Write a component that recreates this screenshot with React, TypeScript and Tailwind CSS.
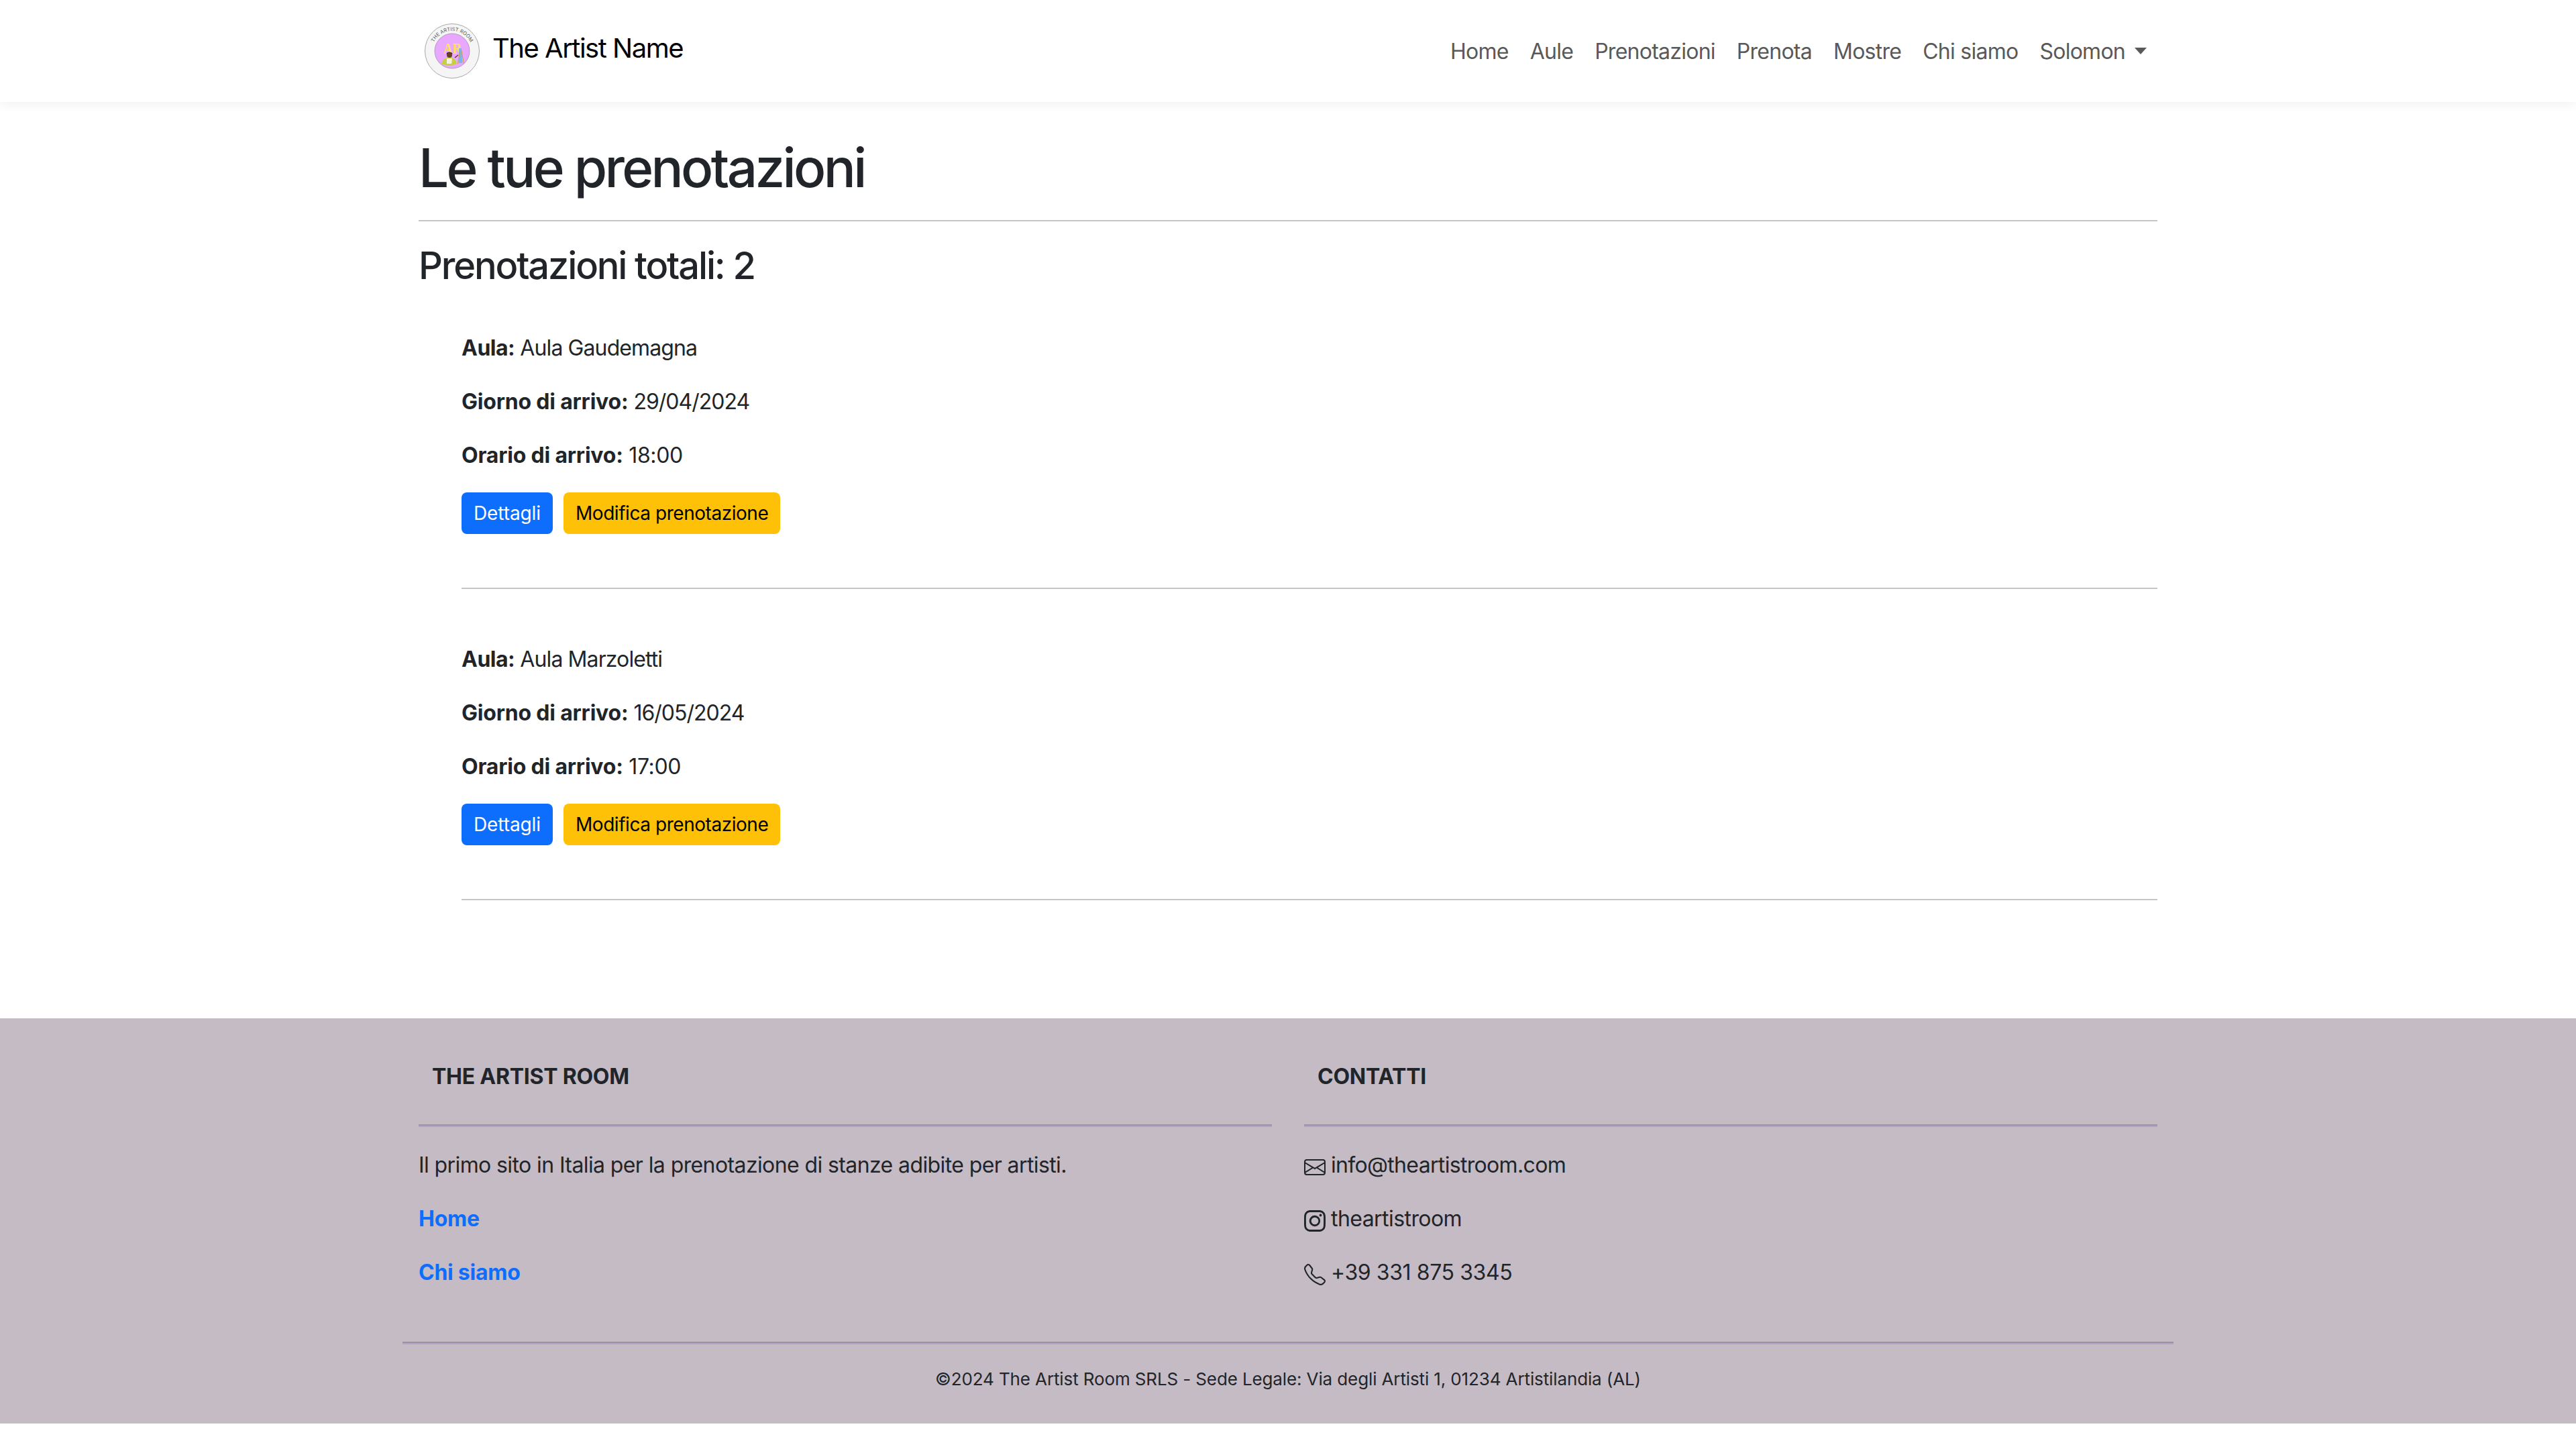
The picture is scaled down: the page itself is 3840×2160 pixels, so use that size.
import React from "react";
import { BsEnvelope, BsInstagram, BsTelephone } from "react-icons/bs";

function Logo() {
  return (
    <svg width="84" height="84" viewBox="0 0 84 84" className="shrink-0">
      <defs>
        <path id="logoArc" d="M 12 42 A 30 30 0 0 1 72 42" fill="none" />
      </defs>
      <circle cx="42" cy="42" r="40.5" fill="#f5f5f5" stroke="#a8a8a8" strokeWidth="1" />
      <circle cx="42" cy="42" r="26" fill="#e9a8ff" stroke="#8a7a90" strokeWidth="0.6" />
      <text fontSize="7.4" fill="#555" fontFamily="Inter, sans-serif">
        <textPath href="#logoArc" startOffset="50%" textAnchor="middle">THE ARTIST ROOM</textPath>
      </text>
      <text x="42.5" y="46" textAnchor="middle" fontSize="23" fontWeight="700" fill="#ffe066" fontFamily="'Liberation Serif', serif" textLength="27" lengthAdjust="spacingAndGlyphs">AR</text>
      <path d="M26 61 Q28 53 35 52 L41 52 Q47 53 49 61 Q38 66 26 61Z" fill="#c4d23c" />
      <path d="M34 53 L42 53 L41 61 L34 61Z" fill="#f3f3e0" />
      <circle cx="38" cy="48" r="4" fill="#6b3d22" />
      <path d="M33.5 47 Q38 41.5 42.5 47 L42 45 Q38 42 34 45Z" fill="#1f1712" />
      <path d="M52 38 L56 38 L57.5 60 L52 60Z" fill="#7fb4e6" />
      <path d="M50.5 61 L53.5 42 M59.5 61 L56 42" stroke="#d99a3d" strokeWidth="1" />
      <path d="M46 52 L51 48" stroke="#6b3d22" strokeWidth="1.6" />
    </svg>
  );
}

function Booking({ aula, giorno, orario }: { aula: string; giorno: string; orario: string }) {
  return (
    <div className="mb-[81px] ml-16">
      <p className="mb-8"><b className="tracking-[-0.5px]">Aula:</b><span className="tracking-[-0.9px]"> {aula}</span></p>
      <p className="mb-8"><b className="tracking-[-0.2px]">Giorno di arrivo:</b><span className="tracking-[-1px]"> {giorno}</span></p>
      <p className="mb-[31px]"><b className="tracking-[-0.2px]">Orario di arrivo:</b><span className="tracking-[-0.4px]"> {orario}</span></p>
      <div className="flex gap-4">
        <a className="h-[62px] rounded-lg bg-[#0d6efd] px-[18px] text-[28px] leading-[62px] tracking-[-0.1px] text-white">Dettagli</a>
        <a className="h-[62px] rounded-lg bg-[#ffc107] px-[18px] text-[28px] leading-[62px] tracking-[-0.45px] text-black">Modifica prenotazione</a>
      </div>
      <hr className="mt-20 h-0.5 border-0 bg-[#c4c5c6]" />
    </div>
  );
}

function Rule() {
  return (
    <div className="h-1 bg-[#b9a0cc]">
      <div className="h-0.5 bg-[#999696]" />
    </div>
  );
}

export default function App() {
  return (
    <div className="font-['Inter',sans-serif] text-[32px] leading-[48px] text-[#212529]">
      <nav className="h-[152px] bg-white shadow-[0_4px_16px_rgba(0,0,0,0.06)]">
        <div className="mx-auto flex h-full w-[2640px] items-center justify-between px-6">
          <div className="flex items-center gap-[18px] pl-[8px]">
            <Logo />
            <span className="-mt-[8px] text-[40px] leading-[60px] tracking-[-1.5px] text-black">The Artist Name</span>
          </div>
          <div className="mt-0.5 flex items-center tracking-[-0.74px] text-[#595959]">
            {["Home", "Aule", "Prenotazioni", "Prenota", "Mostre", "Chi siamo"].map((l) => (
              <a key={l} className="px-4">{l}</a>
            ))}
            <a className="flex items-center px-4">
              Solomon
              <span className="mt-[-2px] ml-[14px] h-0 w-0 border-x-[9.5px] border-t-[10px] border-x-transparent border-t-[#595959]" />
            </a>
          </div>
        </div>
      </nav>

      <main className="mx-auto h-[1366px] w-[2640px] px-6">
        <h1 className="pt-[50px] text-[80px] leading-[96px] font-medium tracking-[-3.65px]">Le tue prenotazioni</h1>
        <hr className="mt-[30px] h-0.5 border-0 bg-[#c4c5c6]" />
        <h3 className="mt-[32px] text-[56px] leading-[68px] font-medium tracking-[-2.15px]">Prenotazioni totali: 2</h3>
        <div className="mt-[65px]">
          <Booking aula="Aula Gaudemagna" giorno="29/04/2024" orario="18:00" />
          <Booking aula="Aula Marzoletti" giorno="16/05/2024" orario="17:00" />
        </div>
      </main>

      <footer className="h-[604px] bg-[#c5bbc5]">
        <div className="mx-auto w-[2640px]">
          <div className="grid grid-cols-2 gap-x-12 px-6">
            <div>
              <div className="flex h-[158px] items-center px-5 pt-4">
                <h5 className="font-bold tracking-[-0.25px]">THE ARTIST ROOM</h5>
              </div>
              <Rule />
              <div className="flex flex-col gap-8 pt-[33px]">
                <p className="tracking-[-0.6px]">Il primo sito in Italia per la prenotazione di stanze adibite per artisti.</p>
                <a className="font-bold tracking-[-0.25px] text-[#0d6efd]">Home</a>
                <a className="font-bold tracking-[-0.25px] text-[#0d6efd]">Chi siamo</a>
              </div>
            </div>
            <div>
              <div className="flex h-[158px] items-center px-5 pt-4">
                <h5 className="font-bold tracking-[-0.25px]">CONTATTI</h5>
              </div>
              <Rule />
              <div className="flex flex-col gap-8 pt-[33px]">
                <p className="flex items-center gap-2 tracking-[-0.67px]"><BsEnvelope size={32} className="mt-1.5" />info@theartistroom.com</p>
                <p className="flex items-center gap-2 tracking-[-0.56px]"><BsInstagram size={32} className="mt-1.5" />theartistroom</p>
                <p className="flex items-center gap-2 tracking-[-0.4px]"><BsTelephone size={32} className="mt-1.5" />+39 331 875 3345</p>
              </div>
            </div>
          </div>
          <div className="mt-[79px]"><Rule /></div>
          <p className="pt-[31px] text-center text-[26px] leading-[42px] tracking-[-0.12px]">©2024 The Artist Room SRLS - Sede Legale: Via degli Artisti 1, 01234 Artistilandia (AL)</p>
        </div>
      </footer>
    </div>
  );
}
